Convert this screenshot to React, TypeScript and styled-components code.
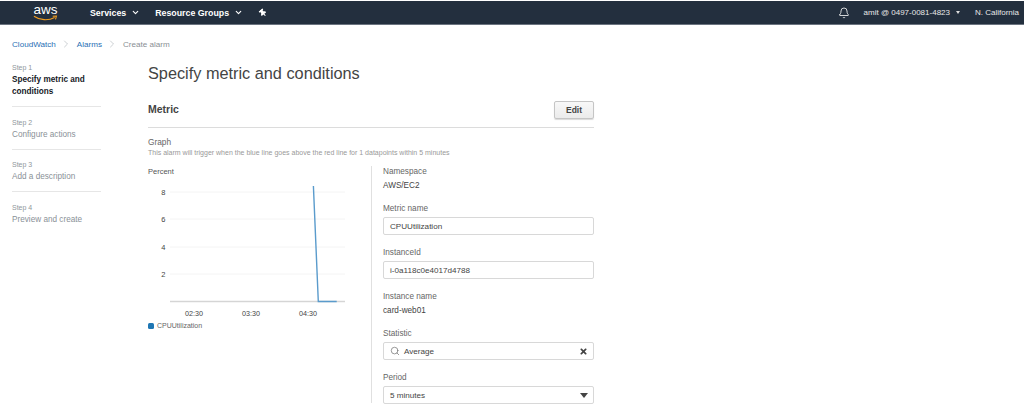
import React from "react";
import styled, { createGlobalStyle } from "styled-components";
import { Bell, ChevronDown, ChevronRight, Search } from "lucide-react";
import { FaThumbtack, FaTimes } from "react-icons/fa";

const GlobalStyle = createGlobalStyle`
    html, body {
        margin: 0;
        padding: 0;
        background: #fff;
        overflow: hidden;
        font-family: "Liberation Sans", Arial, sans-serif;
    }
`;

const steps = [
    { step: "Step 1", name: "Specify metric and conditions", active: true },
    { step: "Step 2", name: "Configure actions", active: false },
    { step: "Step 3", name: "Add a description", active: false },
    { step: "Step 4", name: "Preview and create", active: false },
];

const gridLines = [
    { y: 14, label: "8" },
    { y: 41, label: "6" },
    { y: 69, label: "4" },
    { y: 96, label: "2" },
];

const timeLabels = [
    { x: 46, label: "02:30" },
    { x: 103, label: "03:30" },
    { x: 160, label: "04:30" },
];

const Chart = () => (
    <ChartSvg viewBox="0 0 222 142" width={222} height={142}>
        {gridLines.map((line) => (
            <g key={line.label}>
                <line x1={22} x2={197} y1={line.y} y2={line.y} stroke="#f4f4f4" strokeWidth={1} />
                <text x={17.5} y={line.y + 3} fontSize={7.5} fill="#444" textAnchor="end">
                    {line.label}
                </text>
            </g>
        ))}
        <line x1={22} x2={197} y1={123.5} y2={123.5} stroke="#d5d5d5" strokeWidth={1.5} />
        {timeLabels.map((tick) => (
            <text key={tick.label} x={tick.x} y={138} fontSize={7.2} fill="#444" textAnchor="middle">
                {tick.label}
            </text>
        ))}
        <polyline
            points="165.4,8 170.3,123.5 188.7,123.5"
            fill="none"
            stroke="#5a9bcc"
            strokeWidth={1.4}
        />
    </ChartSvg>
);

export default function App() {
    return (
        <>
            <GlobalStyle />
            <Page>
                <NavBar>
                    <NavLeft>
                        <Logo>
                            <LogoText>aws</LogoText>
                            <LogoSmile viewBox="0 0 26 7" width={25} height={7}>
                                <path d="M1 1.2C7 5.4 16 6 22.5 2.4" fill="none" stroke="#f29d1f" strokeWidth={1.2} />
                                <path d="M20.5 1.2L24.4 1l-1 3.4" fill="none" stroke="#f29d1f" strokeWidth={1.1} />
                            </LogoSmile>
                        </Logo>
                        <NavItem>
                            Services <ChevronDown size={9} strokeWidth={3} />
                        </NavItem>
                        <NavItem>
                            Resource Groups <ChevronDown size={9} strokeWidth={3} />
                        </NavItem>
                        <PinIcon />
                    </NavLeft>
                    <NavRight>
                        <Bell size={12} strokeWidth={1.6} color="#fff" />
                        <AccountLabel>
                            amit @ 0497-0081-4823 <NavCaret />
                        </AccountLabel>
                        <RegionLabel>N. California</RegionLabel>
                    </NavRight>
                </NavBar>

                <Breadcrumbs>
                    <CrumbLink>CloudWatch</CrumbLink>
                    <CrumbSep size={12} strokeWidth={1.2} />
                    <CrumbLink>Alarms</CrumbLink>
                    <CrumbSep size={12} strokeWidth={1.2} />
                    <CrumbCurrent>Create alarm</CrumbCurrent>
                </Breadcrumbs>

                <Body>
                    <Sidebar>
                        {steps.map((item) => (
                            <StepItem key={item.step}>
                                <StepNumber>{item.step}</StepNumber>
                                <StepName $active={item.active}>{item.name}</StepName>
                            </StepItem>
                        ))}
                    </Sidebar>

                    <Main>
                        <Title>Specify metric and conditions</Title>
                        <SectionHeader>
                            <SectionTitle>Metric</SectionTitle>
                            <EditButton>Edit</EditButton>
                        </SectionHeader>
                        <GraphTitle>Graph</GraphTitle>
                        <GraphHint>
                            This alarm will trigger when the blue line goes above the red line for 1 datapoints within 5 minutes
                        </GraphHint>
                        <Columns>
                            <ChartColumn>
                                <ChartUnit>Percent</ChartUnit>
                                <Chart />
                                <Legend>
                                    <LegendSwatch />
                                    CPUUtilization
                                </Legend>
                            </ChartColumn>
                            <FormColumn>
                                <FieldLabel>Namespace</FieldLabel>
                                <StaticValue>AWS/EC2</StaticValue>
                                <FieldLabel>Metric name</FieldLabel>
                                <InputBox>CPUUtilization</InputBox>
                                <FieldLabel>InstanceId</FieldLabel>
                                <InputBox>i-0a118c0e4017d4788</InputBox>
                                <FieldLabel>Instance name</FieldLabel>
                                <StaticValue>card-web01</StaticValue>
                                <FieldLabel>Statistic</FieldLabel>
                                <InputBox>
                                    <Search size={10} strokeWidth={1.6} color="#666" />
                                    <InputGrow>Average</InputGrow>
                                    <FaTimes size={9} color="#444" />
                                </InputBox>
                                <FieldLabel>Period</FieldLabel>
                                <InputBox>
                                    <InputGrow>5 minutes</InputGrow>
                                    <SelectCaret />
                                </InputBox>
                            </FormColumn>
                        </Columns>
                    </Main>
                </Body>
            </Page>
        </>
    );
}

const Page = styled.div`
    width: 1024px;
    height: 420px;
    overflow: hidden;
    padding-top: 1px;
    box-sizing: border-box;
`;

const NavBar = styled.div`
    height: 23px;
    background: #232f3e;
    border-bottom: 1px solid #6b7480;
    display: flex;
    justify-content: space-between;
    align-items: center;
    color: #fff;
    font-size: 8.8px;
`;

const NavLeft = styled.div`
    display: flex;
    align-items: center;
`;

const Logo = styled.div`
    width: 25px;
    margin-left: 33px;
    margin-right: 32px;
    display: flex;
    flex-direction: column;
    align-items: center;
`;

const LogoText = styled.span`
    font-size: 13.5px;
    line-height: 11px;
    color: #fff;
`;

const LogoSmile = styled.svg`
    display: block;
`;

const NavItem = styled.div`
    display: flex;
    align-items: center;
    gap: 5px;
    font-weight: bold;
    margin-right: 15px;
`;

const PinIcon = styled(FaThumbtack)`
    width: 8px;
    height: 8px;
    margin-left: 1px;
    transform: rotate(-40deg);
`;

const NavRight = styled.div`
    display: flex;
    align-items: center;
`;

const AccountLabel = styled.div`
    display: flex;
    align-items: center;
    gap: 6px;
    margin-left: 14px;
    color: #e8e8e8;
    font-size: 8px;
`;

const NavCaret = styled.span`
    width: 0;
    height: 0;
    border-left: 2.5px solid transparent;
    border-right: 2.5px solid transparent;
    border-top: 3px solid #ddd;
`;

const RegionLabel = styled.div`
    margin-left: 15px;
    margin-right: 5px;
    color: #e8e8e8;
    font-size: 8px;
`;

const Breadcrumbs = styled.div`
    display: flex;
    align-items: center;
    height: 12px;
    margin-top: 13px;
    padding-left: 12px;
    font-size: 8.1px;
`;

const CrumbLink = styled.span`
    color: #2a6fb5;
`;

const CrumbCurrent = styled.span`
    color: #8a8f94;
`;

const CrumbSep = styled(ChevronRight)`
    color: #aab0b5;
    margin: 0 4.5px;
`;

const Body = styled.div`
    display: flex;
    margin-top: 5px;
`;

const Sidebar = styled.div`
    width: 89px;
    margin-left: 12px;
    margin-right: 47px;
    padding-top: 7px;
`;

const StepItem = styled.div`
    padding: 0 0 8px;
    margin-bottom: 9.5px;
    border-bottom: 1px solid #e6e6e6;

    &:last-child {
        border-bottom: none;
    }
`;

const StepNumber = styled.div`
    font-size: 7px;
    line-height: 12px;
    color: #8f979c;
`;

const StepName = styled.div<{ $active: boolean }>`
    font-size: 8.2px;
    line-height: 12px;
    font-weight: ${(props) => (props.$active ? "bold" : "normal")};
    color: ${(props) => (props.$active ? "#16191f" : "#8a9197")};
`;

const Main = styled.div`
    width: 446px;
    margin-top: 8px;
    display: flex;
    flex-direction: column;
`;

const Title = styled.div`
    font-size: 16.3px;
    line-height: 20px;
    color: #444;
    margin-bottom: 17px;
`;

const SectionHeader = styled.div`
    height: 27px;
    display: flex;
    justify-content: space-between;
    align-items: flex-start;
    border-bottom: 1px solid #dcdcdc;
`;

const SectionTitle = styled.div`
    font-size: 10.5px;
    line-height: 18px;
    font-weight: bold;
    color: #444;
`;

const EditButton = styled.button`
    width: 40px;
    height: 18px;
    margin-top: 1px;
    padding: 0;
    font-family: inherit;
    font-size: 8.5px;
    font-weight: bold;
    color: #444;
    background: linear-gradient(#f8f8f8, #ebebeb);
    border: 1px solid #c5c5c5;
    border-radius: 2px;
    box-shadow: 0 1px 1px rgba(0, 0, 0, 0.15);
`;

const GraphTitle = styled.div`
    margin-top: 9px;
    font-size: 8.3px;
    line-height: 11px;
    color: #666;
`;

const GraphHint = styled.div`
    font-size: 7px;
    line-height: 9px;
    color: #999;
`;

const Columns = styled.div`
    display: flex;
    margin-top: 9px;
`;

const ChartColumn = styled.div`
    width: 223px;
    border-right: 1px solid #e0e0e0;
    height: 237px;
`;

const ChartUnit = styled.div`
    font-size: 7.5px;
    line-height: 12px;
    color: #555;
`;

const ChartSvg = styled.svg`
    display: block;
    font-family: "Liberation Sans", Arial, sans-serif;
`;

const Legend = styled.div`
    display: flex;
    align-items: center;
    gap: 3px;
    font-size: 7px;
    line-height: 12px;
    color: #666;
`;

const LegendSwatch = styled.span`
    width: 6px;
    height: 6px;
    border-radius: 1.5px;
    background: #1f77b4;
`;

const FormColumn = styled.div`
    flex: 1;
    padding-left: 11px;
    display: flex;
    flex-direction: column;
`;

const FieldLabel = styled.div`
    font-size: 8.2px;
    line-height: 12px;
    color: #666;
`;

const StaticValue = styled.div`
    font-size: 8.2px;
    line-height: 12px;
    color: #444;
    margin: 2px 0 11px;
`;

const InputBox = styled.div`
    height: 18px;
    box-sizing: border-box;
    display: flex;
    align-items: center;
    gap: 4px;
    padding: 0 5px 0 6px;
    margin: 2px 0 12px;
    font-size: 8.1px;
    color: #444;
    border: 1px solid #d8d8d8;
    border-radius: 2px;
`;

const InputGrow = styled.span`
    flex: 1;
`;

const SelectCaret = styled.span`
    width: 0;
    height: 0;
    border-left: 4.5px solid transparent;
    border-right: 4.5px solid transparent;
    border-top: 5px solid #444;
`;
